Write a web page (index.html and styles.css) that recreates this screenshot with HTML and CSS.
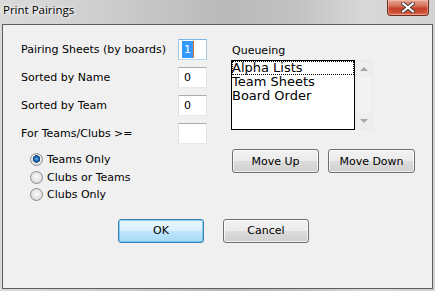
FILE: index.html
```html
<!DOCTYPE html>
<html lang="en">
<head>
  <meta charset="UTF-8">
  <title>Print Pairings</title>
  <link rel="stylesheet" href="styles.css">
</head>
<body>
<div class="window">
  <!-- title bar -->
  <div class="titlebar">
    <span class="title">Print Pairings</span>
    <div class="close-btn">
      <svg width="14" height="11" viewBox="0 0 14 11">
        <path d="M2 1.5 L12 9.5 M12 1.5 L2 9.5" stroke="#4a3a3a" stroke-width="4" stroke-linecap="round"/>
        <path d="M2 1.5 L12 9.5 M12 1.5 L2 9.5" stroke="#ffffff" stroke-width="2.2" stroke-linecap="round"/>
      </svg>
    </div>
  </div>

  <div class="client">
    <div class="columns">
      <!-- left side: counts + radio options -->
      <div class="left-col">
        <div class="field-row">
          <span class="field-label">Pairing Sheets (by boards)</span>
          <div class="textbox focused"><span class="sel">1</span></div>
        </div>
        <div class="field-row">
          <span class="field-label">Sorted by Name</span>
          <div class="textbox">0</div>
        </div>
        <div class="field-row">
          <span class="field-label">Sorted by Team</span>
          <div class="textbox">0</div>
        </div>
        <div class="field-row">
          <span class="field-label">For Teams/Clubs &gt;=</span>
          <div class="textbox"></div>
        </div>

        <div class="radio-group">
          <div class="radio-row"><span class="radio checked"></span>Teams Only</div>
          <div class="radio-row"><span class="radio"></span>Clubs or Teams</div>
          <div class="radio-row"><span class="radio"></span>Clubs Only</div>
        </div>
      </div>

      <!-- right side: queue list -->
      <div class="right-col">
        <div class="queue-label">Queueing</div>
        <div class="list-wrap">
          <ul class="listbox">
            <li class="focus">Alpha Lists</li>
            <li>Team Sheets</li>
            <li>Board Order</li>
          </ul>
          <div class="scrollbar">
            <div class="arrow"><span class="tri-up"></span></div>
            <div class="track"></div>
            <div class="arrow"><span class="tri-down"></span></div>
          </div>
        </div>
        <div class="move-buttons">
          <div class="btn move">Move Up</div>
          <div class="btn move">Move Down</div>
        </div>
      </div>
    </div>

    <div class="footer">
      <div class="btn default">OK</div>
      <div class="btn">Cancel</div>
    </div>
  </div>
</div>
</body>
</html>
```

FILE: styles.css
```css
* {
  margin: 0;
  padding: 0;
  box-sizing: border-box;
}

body {
  width: 435px;
  height: 291px;
  overflow: hidden;
  font-family: "DejaVu Sans", Verdana, sans-serif;
  font-size: 11px;
  color: #000;
}

/* window frame */
.window {
  width: 435px;
  height: 291px;
  padding: 0 2px 2px 2px;
  display: flex;
  flex-direction: column;
  background: linear-gradient(90deg, #dadada 0%, #cfcfcf 22%, #b9b9b9 52%, #c2c2c2 68%, #d8d8d8 84%, #d2d2d2 100%);
}

.titlebar {
  height: 24px;
  display: flex;
  justify-content: space-between;
  align-items: flex-start;
  flex-shrink: 0;
}

.title {
  font-family: "Open Sans", "Noto Sans", sans-serif;
  font-size: 11.5px;
  line-height: 20px;
  padding-left: 1px;
  color: #000;
  text-shadow: 0 0 6px #fff, 0 0 3px #fff;
}

.close-btn {
  width: 42px;
  height: 16px;
  margin-right: 4px;
  border: 1px solid #6a2b22;
  border-top: none;
  border-radius: 0 0 4px 4px;
  background: linear-gradient(180deg, #e6a595 0%, #d7705a 40%, #c4412a 55%, #cf5237 85%, #e07a5c 100%);
  box-shadow: inset 0 0 0 1px rgba(255, 210, 190, 0.45);
  display: flex;
  justify-content: center;
  align-items: center;
}

/* client area */
.client {
  flex: 1;
  background-color: #f0f0f0;
  border: 1px solid #5e5e5e;
  padding: 14px 0 0 18px;
}

.columns {
  display: flex;
}

.left-col {
  width: 186px;
}

.field-row {
  height: 21px;
  margin-bottom: 7px;
  display: flex;
  justify-content: space-between;
  align-items: center;
}

.textbox {
  width: 29px;
  height: 21px;
  background: #fff;
  border: 1px solid;
  border-color: #abadb3 #e2e3ea #e3e9ef #dbdfe6;
  padding-left: 5px;
  line-height: 19px;
}

.textbox.focused {
  border-color: #7eb4ea #a4c9e3 #b7d9ed #a4c9e3;
  padding-left: 3px;
  padding-top: 1px;
  line-height: 17px;
}

.sel {
  display: inline-block;
  height: 17px;
  padding: 0 2px 0 2px;
  background: #3399ff;
  color: #fff;
  border-right: 1px solid #d8742a;
}

.radio-group {
  margin-top: 7px;
  padding-left: 9px;
}

.radio-row {
  height: 17.5px;
  display: flex;
  align-items: center;
}

.radio {
  width: 13px;
  height: 13px;
  margin-right: 4px;
  border-radius: 50%;
  border: 1px solid #8d8d8d;
  background: radial-gradient(circle at 50% 45%, #fbfbfb 0%, #e6e6e6 50%, #cbcbcb 100%);
}

.radio.checked {
  background: radial-gradient(circle at 50% 45%, #6fc0f2 0px, #1f6fb3 2px, #0d3f78 3.5px, #e9e9e9 4px, #dadada 100%);
}

/* queue list */
.right-col {
  margin-left: 24px;
}

.queue-label {
  margin-top: 5px;
  margin-bottom: 2px;
  line-height: 14px;
  padding-left: 1px;
}

.list-wrap {
  display: flex;
  gap: 1px;
}

.listbox {
  list-style: none;
  width: 124px;
  height: 70px;
  background: #fff;
  border: 1px solid #000;
  font-size: 13px;
}

.listbox li {
  height: 14px;
  line-height: 14px;
  padding-left: 0;
}

.listbox li.focus {
  outline: 1px dotted #000;
  outline-offset: -1px;
}

.scrollbar {
  width: 16px;
  height: 70px;
  background: #eeeeee;
  border: 1px solid #e8e8e8;
  display: flex;
  flex-direction: column;
}

.scrollbar .arrow {
  height: 16px;
  display: flex;
  justify-content: center;
  align-items: center;
}

.scrollbar .track {
  flex: 1;
  background: #f3f3f3;
}

.tri-up {
  width: 0;
  height: 0;
  border-left: 4px solid transparent;
  border-right: 4px solid transparent;
  border-bottom: 4px solid #a6a6a6;
}

.tri-down {
  width: 0;
  height: 0;
  border-left: 4px solid transparent;
  border-right: 4px solid transparent;
  border-top: 4px solid #a6a6a6;
}

.move-buttons {
  margin-top: 19px;
  margin-left: 1px;
  display: flex;
  gap: 9px;
}

/* win7 style buttons */
.btn {
  width: 86px;
  height: 24px;
  border: 1px solid #707070;
  border-radius: 3px;
  background: linear-gradient(180deg, #f2f2f2 0%, #ebebeb 49%, #dddddd 50%, #cfcfcf 100%);
  box-shadow: inset 0 0 0 1px rgba(255, 255, 255, 0.7);
  display: flex;
  justify-content: center;
  align-items: center;
  font-size: 11px;
}

.btn.move {
  width: 87px;
}

.btn.default {
  border-color: #3c7fb1;
  background: linear-gradient(180deg, #eaf6fd 0%, #d9f0fc 49%, #bee6fd 50%, #a7d9f5 100%);
  box-shadow: inset 0 0 0 1px rgba(60, 180, 240, 0.55);
}

.footer {
  margin-top: 15px;
  padding-left: 97px;
  display: flex;
  gap: 19px;
}
```
